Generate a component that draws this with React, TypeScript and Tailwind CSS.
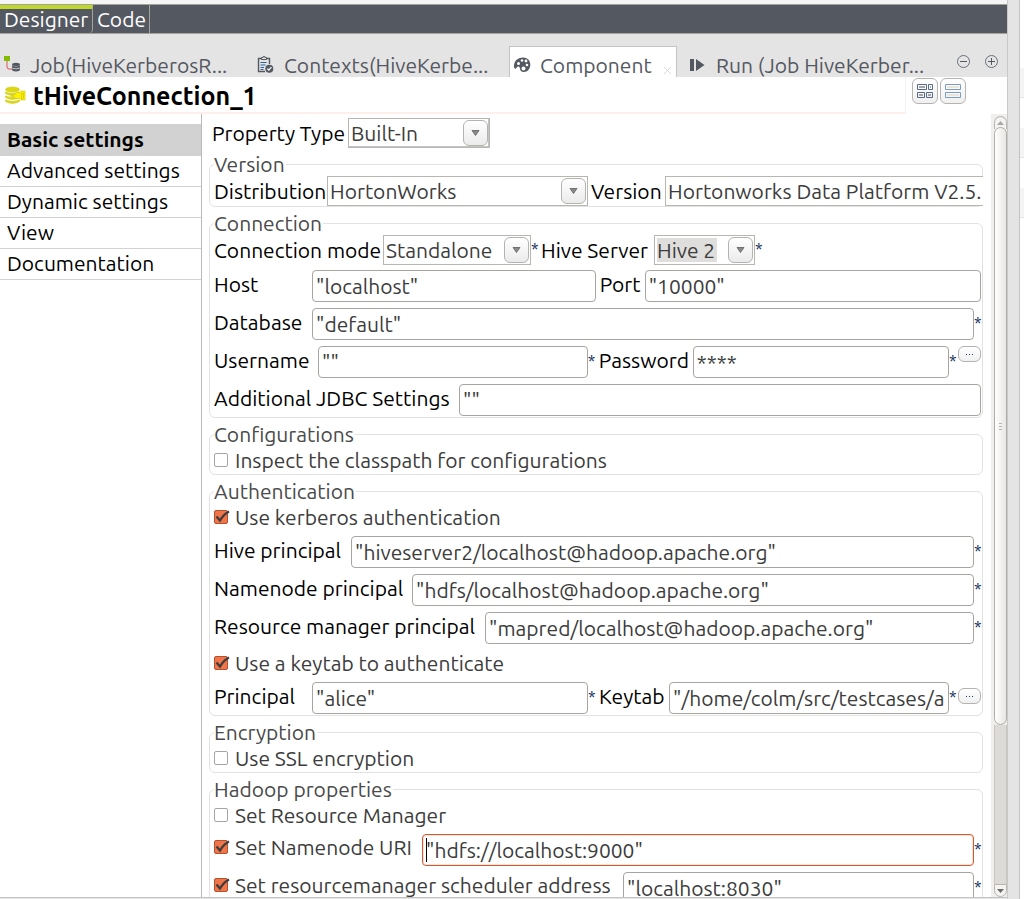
import { useId } from 'react';
import type { ReactNode } from 'react';

const sections = ['Basic settings', 'Advanced settings', 'Dynamic settings', 'View', 'Documentation'];

const Star = () => (
    <span className="w-[7px] shrink-0 pb-0.5 text-center text-base leading-5 text-[#0f2d5c]">*</span>
);

interface MoreButtonProps {
    label: string;
    className: string;
}

const MoreButton = ({ label, className }: MoreButtonProps) => (
    <button
        type="button"
        aria-label={label}
        className={`ml-0.5 flex h-4 w-[23px] shrink-0 items-center justify-center gap-0.5 rounded-md border border-[#b5b3b0] bg-gradient-to-b from-white to-[#f0f0f0] ${className}`}
    >
        <span className="h-px w-px bg-[#1d3a63]" />
        <span className="h-px w-px bg-[#1d3a63]" />
        <span className="h-px w-px bg-[#1d3a63]" />
    </button>
);

interface GroupProps {
    title: string;
    children: ReactNode;
}

const Group = ({ title, children }: GroupProps) => (
    <fieldset className="min-w-0 rounded-md border border-[#e2e2e2] pr-px pb-px pl-1">
        <legend className="h-[21px] pr-px leading-[21px] text-[#4a4a4a]">{title}</legend>
        <div className="flex flex-col gap-1.5">{children}</div>
    </fieldset>
);

interface SelectProps {
    label: string;
    labelClass: string;
    value: string;
    className: string;
    selectClass?: string;
    arrow?: boolean;
}

const SelectField = ({ label, labelClass, value, className, selectClass = '', arrow = true }: SelectProps) => {
    const id = useId();
    return (
        <>
            <label htmlFor={id} className={`shrink-0 whitespace-nowrap text-black ${labelClass}`}>{label}</label>
            <div className={`relative ${className}`}>
                <select
                    id={id}
                    defaultValue={value}
                    className={`block h-[30px] w-full appearance-none border border-[#b9b5af] bg-white pb-px pl-0.5 text-[#3c3c3c] outline-none ${selectClass}`}
                >
                    <option>{value}</option>
                </select>
                {arrow && (
                    <span className="pointer-events-none absolute top-0.5 right-0.5 flex h-[26px] w-[25px] items-center justify-center rounded-md border border-[#b5b3b0] bg-gradient-to-b from-white to-[#ebebeb]">
                        <svg width="9" height="6" viewBox="0 0 9 6">
                            <path d="M1 0.5h7L4.5 5.5z" fill="#8a8a8a" stroke="#5e5e5e" strokeWidth="0.8" />
                        </svg>
                    </span>
                )}
            </div>
        </>
    );
};

interface TextFieldProps {
    label: string;
    labelClass?: string;
    value: string;
    className?: string;
}

const TextField = ({ label, labelClass = '', value, className = 'flex-1' }: TextFieldProps) => {
    const id = useId();
    return (
        <>
            <label htmlFor={id} className={`shrink-0 pb-1 whitespace-nowrap text-black ${labelClass}`}>{label}</label>
            <input
                id={id}
                defaultValue={value}
                className={`h-8 min-w-0 rounded border border-[#a8a49e] bg-white px-[3px] text-[#3c3c3c] outline-none ${className}`}
            />
        </>
    );
};

interface CheckProps {
    label: string;
    checked?: boolean;
    className?: string;
}

const Check = ({ label, checked = false, className = '' }: CheckProps) => (
    <label className={`flex shrink-0 items-center whitespace-nowrap text-[#3c3c3c] ${className}`}>
        <span className="relative mr-1.5 h-[15px] w-[15px]">
            <input
                type="checkbox"
                defaultChecked={checked}
                className="peer block h-[14px] w-[14px] appearance-none rounded-xs border border-[#a5a5a5] bg-white checked:border-[#b5502c] checked:bg-[#f0754a]"
            />
            <svg
                className="pointer-events-none absolute top-0 left-0 hidden peer-checked:block"
                width="16"
                height="14"
                viewBox="0 0 16 14"
                fill="none"
            >
                <path d="M2.5 6.5L6 10.5C8 7 11 3.5 15 1.5" stroke="#3c3c3c" strokeWidth="2.2" />
            </svg>
        </span>
        {label}
    </label>
);

const JobIcon = () => (
    <svg width="17" height="17" viewBox="0 0 17 17" fill="none">
        <rect x="0" y="0" width="6" height="5" fill="#84bd00" />
        <path d="M3 5v6q0 2 2 2h3" stroke="#e0525b" />
        <g fill="#545861">
            <ellipse cx="12" cy="8.5" rx="4" ry="1.7" />
            <path d="M8 9.5q4 2 8 0v2q-4 2-8 0zM8 12.3q4 2 8 0v2q-4 2.6-8 0z" />
        </g>
    </svg>
);

const ContextIcon = () => (
    <svg width="17" height="18" viewBox="0 0 17 18" fill="none">
        <path d="M8 15.5H1.5V2.5H4M10 2.5h2.5V8" stroke="#545861" strokeWidth="1.4" />
        <path d="M4.5 3.5v-2h1.500V.7h2v.8h1.500v2z" stroke="#545861" />
        <path d="M3.5 6.5h6M3.5 9h5M3.5 11.5h3.500M3.5 13.5h3" stroke="#2f5f9a" />
        <circle cx="12.3" cy="12.7" r="4" fill="#545861" />
        <path d="M10.3 12.7l1.500 1.500 2.600-3" stroke="#fff" strokeWidth="1.2" />
    </svg>
);

const PaletteIcon = () => (
    <svg width="17" height="16" viewBox="0 0 17 16">
        <path
            d="M9 .5C3.500.5 0 4.500 0 9c0 3 1.800 3.500 2.500 1.800C3.500 9 5.500 9 5.800 11c.3 2.500 1.500 4 4 4 4 0 6.500-3.500 6.500-7.500S13.500.5 9 .5z"
            fill="#545861"
        />
        <g fill="#fff">
            <circle cx="4.5" cy="6.5" r="1.5" />
            <circle cx="8" cy="3.5" r="1.3" />
            <circle cx="12" cy="4" r="1.4" />
            <circle cx="13" cy="8" r="1.3" />
            <circle cx="9.5" cy="11.5" r="2" />
        </g>
    </svg>
);

const RunIcon = () => (
    <svg width="15" height="12" viewBox="0 0 15 12" fill="#545861">
        <path d="M0 0h4v12H0zM6 0l8.500 6L6 12z" />
    </svg>
);

const HiveIcon = () => (
    <svg width="21" height="19" viewBox="0 0 21 19">
        <g fill="#dcd80c" stroke="#c2be08" strokeWidth="0.4">
            <path d="M.5 13.800v1.800q7 3.800 14 0v-1.800q-7 3-14 0z" />
            <path d="M.5 9.800v1.800q7 3.800 14 0V9.800q-7 3-14 0z" />
            <path d="M.5 5.800v1.800q7 3.800 14 0V5.800q-7 3-14 0z" />
            <ellipse cx="7.5" cy="3.5" rx="7" ry="2.6" />
        </g>
        <path d="M6 9.500h3l2-3h4l1-1.500h4v9h-4l-1-1.500h-4l-2-2H6z" fill="#fff200" stroke="#d2c800" strokeWidth="0.6" />
        <path d="M16.500 7v5.500h2V7z" fill="none" stroke="#d2c800" strokeWidth="0.8" />
    </svg>
);

const GridIcon = () => (
    <svg width="17" height="15" viewBox="0 0 17 15" fill="#a5a5a5">
        <path d="M2 2h6v2H2zM13 2h1v2h-1zM2 10h4v2H2zM11 10h3v2h-3z" />
        <path d="M.5.5h9v5h-9zM11.500.5h4v5h-4zM.5 8.500h7v5h-7zM9.500 8.500h6v5h-6z" fill="none" stroke="#54698c" />
    </svg>
);

const RowsIcon = () => (
    <svg width="17" height="15" viewBox="0 0 17 15" fill="#ebe5d6">
        <path d="M2 2h12v2H2zM2 10h12v2H2z" />
        <path d="M.5.5h15v5H.5zM.5 8.500h15v5H.5z" fill="none" stroke="#7b9cc4" />
    </svg>
);

const roundButton = 'flex h-[13px] w-[13px] items-center justify-center rounded-full border border-[#6b6f78]';
const viewButton =
    'flex h-[26px] w-[26px] items-center justify-center rounded-md border border-[#b5b3b0] bg-gradient-to-b from-white to-[#f0f0f0]';

const TabBar = () => (
    <div className="flex h-[43px] shrink-0 items-end bg-[#e4e4e4] text-[#545861]">
        <button className="flex h-[31px] w-[253px] items-center pt-1.5 pl-1">
            <JobIcon />
            <span className="ml-[9px] whitespace-nowrap">Job(HiveKerberosR...</span>
        </button>
        <button className="flex h-[31px] w-[256px] items-center pt-1.5 pl-1">
            <ContextIcon />
            <span className="ml-2.5 whitespace-nowrap">Contexts(HiveKerbe...</span>
        </button>
        <div className="flex h-[31px] w-[168px] items-center border border-b-0 border-[#c4c4c4] bg-white pt-1.5 pl-1">
            <button className="flex items-center">
                <PaletteIcon />
                <span className="ml-[9px]">Component</span>
            </button>
            <button aria-label="Close" className="mt-2.5 mr-1 ml-auto">
                <svg width="9" height="9" viewBox="0 0 9 9">
                    <path d="M1 1l7 7M8 1L1 8" stroke="#d9d9d9" />
                </svg>
            </button>
        </div>
        <button className="flex h-[31px] items-center pt-1.5 pl-[13px]">
            <RunIcon />
            <span className="ml-[11px] whitespace-nowrap">Run (Job HiveKerber...</span>
        </button>
        <div className="mr-[9px] mb-[9px] ml-auto flex gap-[15px]">
            <button aria-label="Minimize" className={roundButton}>
                <span className="h-px w-[7px] bg-[#545861]" />
            </button>
            <button aria-label="Maximize" className={roundButton}>
                <svg width="7" height="7" viewBox="0 0 7 7">
                    <path d="M0 3.500h7M3.500 0v7" stroke="#545861" />
                </svg>
            </button>
        </div>
    </div>
);

const ScrollBar = () => (
    <div className="flex w-4 shrink-0 flex-col bg-[#f0efee] pt-0.5 pl-[3px]">
        <div className="flex h-[13px] items-center justify-center rounded-t-full border border-b-0 border-[#b9b5af] bg-[#f4f3f2]">
            <svg width="7" height="4" viewBox="0 0 7 4" fill="#a8a8a8">
                <path d="M0 4l3.500-4L7 4z" />
            </svg>
        </div>
        <div className="-mt-0.5 flex grow-[594] flex-col items-center justify-center gap-0.5 rounded-full border border-[#b0ada8] bg-gradient-to-r from-white to-[#e8e6e3]">
            <span className="h-px w-[3px] bg-[#b5b3b0]" />
            <span className="h-px w-[3px] bg-[#b5b3b0]" />
            <span className="h-px w-[3px] bg-[#b5b3b0]" />
        </div>
        <div className="grow-[160] border-x border-[#c9c6c2] bg-[#dddbd8]" />
        <div className="flex h-[13px] items-center justify-center rounded-b-full border border-[#b9b5af] bg-[#f4f3f2]">
            <svg width="7" height="4" viewBox="0 0 7 4" fill="#6b6b6b">
                <path d="M0 0l3.500 4L7 0z" />
            </svg>
        </div>
    </div>
);

const SettingsForm = () => (
    <form className="flex min-w-0 flex-1 flex-col gap-1.5 overflow-hidden pt-1 pr-2 pl-[7px]">
        <div className="flex shrink-0 items-center pl-[3px]">
            <SelectField label="Property Type" labelClass="w-[136px]" value="Built-In" className="w-[142px]" selectClass="shadow-[inset_-1px_-1px_0_#c4c4c4]" />
        </div>

        <Group title="Version">
            <div className="-mr-0.5 -mb-px flex items-center pt-px">
                <SelectField label="Distribution" labelClass="w-[113px]" value="HortonWorks" className="flex-[261]" />
                <SelectField label="Version" labelClass="ml-[3px] w-[74px]" value="Hortonworks Data Platform V2.5." className="flex-[318] overflow-hidden" selectClass="border-r-0" arrow={false} />
            </div>
        </Group>

        <Group title="Connection">
            <div className="-mb-px flex items-center pt-px">
                <SelectField label="Connection mode" labelClass="w-[169px]" value="Standalone" className="w-[148px]" />
                <Star />
                <SelectField
                    label="Hive Server"
                    labelClass="ml-[3px] w-[113px]"
                    value="Hive 2"
                    className="w-[101px]"
                    selectClass="bg-[linear-gradient(#dfdedc,#dfdedc)] bg-[length:60px_24px] bg-[position:2px_2px] bg-no-repeat"
                />
                <Star />
            </div>
            <div className="flex items-center">
                <TextField label="Host" labelClass="w-[98px]" value={'"localhost"'} className="flex-[283]" />
                <TextField label="Port" labelClass="ml-1 w-[45px]" value={'"10000"'} className="flex-[337]" />
            </div>
            <div className="flex items-center">
                <TextField label="Database" labelClass="w-[98px]" value={'"default"'} />
                <Star />
            </div>
            <div className="flex items-center">
                <TextField label="Username" labelClass="w-[104px]" value={'""'} className="flex-[270]" />
                <Star />
                <TextField label="Password" labelClass="ml-1 w-[94px]" value="****" className="flex-[256]" />
                <Star />
                <MoreButton label="Edit password" className="mb-4" />
            </div>
            <div className="flex items-center">
                <TextField label="Additional JDBC Settings" labelClass="w-[245px]" value={'""'} />
            </div>
        </Group>

        <Group title="Configurations">
            <Check label="Inspect the classpath for configurations" className="h-7 pt-0.5" />
        </Group>

        <Group title="Authentication">
            <Check label="Use kerberos authentication" checked className="h-7 pt-0.5" />
            <div className="flex items-center">
                <TextField label="Hive principal" labelClass="w-[137px]" value={'"hiveserver2/localhost@hadoop.apache.org"'} />
                <Star />
            </div>
            <div className="flex items-center">
                <TextField label="Namenode principal" labelClass="w-[198px]" value={'"hdfs/localhost@hadoop.apache.org"'} />
                <Star />
            </div>
            <div className="flex items-center">
                <TextField label="Resource manager principal" labelClass="w-[271px]" value={'"mapred/localhost@hadoop.apache.org"'} />
                <Star />
            </div>
            <Check label="Use a keytab to authenticate" checked className="h-[26px]" />
            <div className="flex items-center">
                <TextField label="Principal" labelClass="w-[98px]" value={'"alice"'} className="flex-[276]" />
                <Star />
                <TextField label="Keytab" labelClass="ml-1 w-[70px]" value={'"/home/colm/src/testcases/a'} className="flex-[280]" />
                <Star />
                <MoreButton label="Browse keytab" className="mb-1" />
            </div>
        </Group>

        <Group title="Encryption">
            <Check label="Use SSL encryption" className="h-7 pt-0.5" />
        </Group>

        <Group title="Hadoop properties">
            <Check label="Set Resource Manager" className="h-7 pt-0.5" />
            <div className="flex items-center">
                <Check label="Set Namenode URI" checked className="w-[208px] pb-1.5" />
                <div className="relative flex flex-1">
                    <input
                        aria-label="Namenode URI"
                        defaultValue={'"hdfs://localhost:9000"'}
                        className="h-8 min-w-0 flex-1 rounded border border-[#cf5b32] px-[3px] text-[#3c3c3c] shadow-[inset_0_0_0_1px_#fbe3d9] outline-none"
                    />
                    {/* text caret */}
                    <span className="pointer-events-none absolute top-1 left-1 h-6 w-px bg-black" />
                </div>
                <Star />
            </div>
            <div className="flex items-center">
                <Check label="Set resourcemanager scheduler address" checked className="w-[409px] pb-1.5" />
                <input
                    aria-label="Resourcemanager scheduler address"
                    defaultValue={'"localhost:8030"'}
                    className="h-8 min-w-0 flex-1 rounded border border-[#a8a49e] px-[3px] text-[#3c3c3c] outline-none"
                />
                <Star />
            </div>
        </Group>
    </form>
);

export default function App() {
    return (
        <div className="flex h-screen overflow-hidden bg-[#e4e4e4] font-['Ubuntu','Noto_Sans',sans-serif] text-[21px] leading-6">
            <main className="flex min-w-0 flex-1 flex-col border-r border-[#c9c9c9] bg-white">
                <div className="h-1 shrink-0 bg-[#f5f5f5]" />
                <div className="flex h-[30px] shrink-0 border-y border-[#a5a29c] bg-[#545861] text-white">
                    <button className="w-[93px] rounded-br border-t-4 border-r border-t-[#bfd62a] border-r-[#a5a29c] pb-1 pl-1 text-left leading-5">Designer</button>
                    <button className="w-[57px] border-r border-[#a5a29c] pl-1 text-left leading-5">Code</button>
                </div>
                <TabBar />
                <header className="flex h-[37px] shrink-0">
                    <h1 className="flex flex-1 items-center border-r border-b-2 border-[#fdf0ec] pt-0.5 pl-[5px] font-bold">
                        <HiveIcon />
                        <span className="ml-[7px] text-[25px]">tHiveConnection_1</span>
                    </h1>
                    <div className="mr-[41px] ml-1.5 flex gap-0.5 pt-px">
                        <button aria-label="Table view" className={viewButton}><GridIcon /></button>
                        <button aria-label="Compact view" className={viewButton}><RowsIcon /></button>
                    </div>
                </header>
                <div className="flex min-h-0 flex-1 border-b border-[#c4c4c4]">
                    <nav className="w-[202px] shrink-0 border-r border-[#b9b9b9] pt-2.5">
                        {sections.map((section, i) => (
                            <button
                                key={section}
                                className={
                                    i === 0
                                        ? 'block h-8 w-full bg-[#d2d2d2] pb-0.5 pl-[7px] text-left font-bold'
                                        : 'block h-[31px] w-full border-b border-[#d2d2d2] pb-0.5 pl-[7px] text-left'
                                }
                            >
                                {section}
                            </button>
                        ))}
                    </nav>
                    <SettingsForm />
                    <ScrollBar />
                </div>
                <div className="h-px shrink-0 bg-[#e4e4e4]" />
            </main>
            <aside className="ml-[11px] w-[5px] shrink-0 border-l border-[#c4c4c4] bg-white pt-[68px]">
                <div className="mb-[30px] h-[30px] border-b border-[#e4e4e4] bg-[#f4f4f4]" />
                <div className="mb-[30px] h-[30px] border-b border-[#e4e4e4] bg-[#f4f4f4]" />
                <div className="h-[30px] border-b border-[#e4e4e4] bg-[#f4f4f4]" />
            </aside>
        </div>
    );
}
